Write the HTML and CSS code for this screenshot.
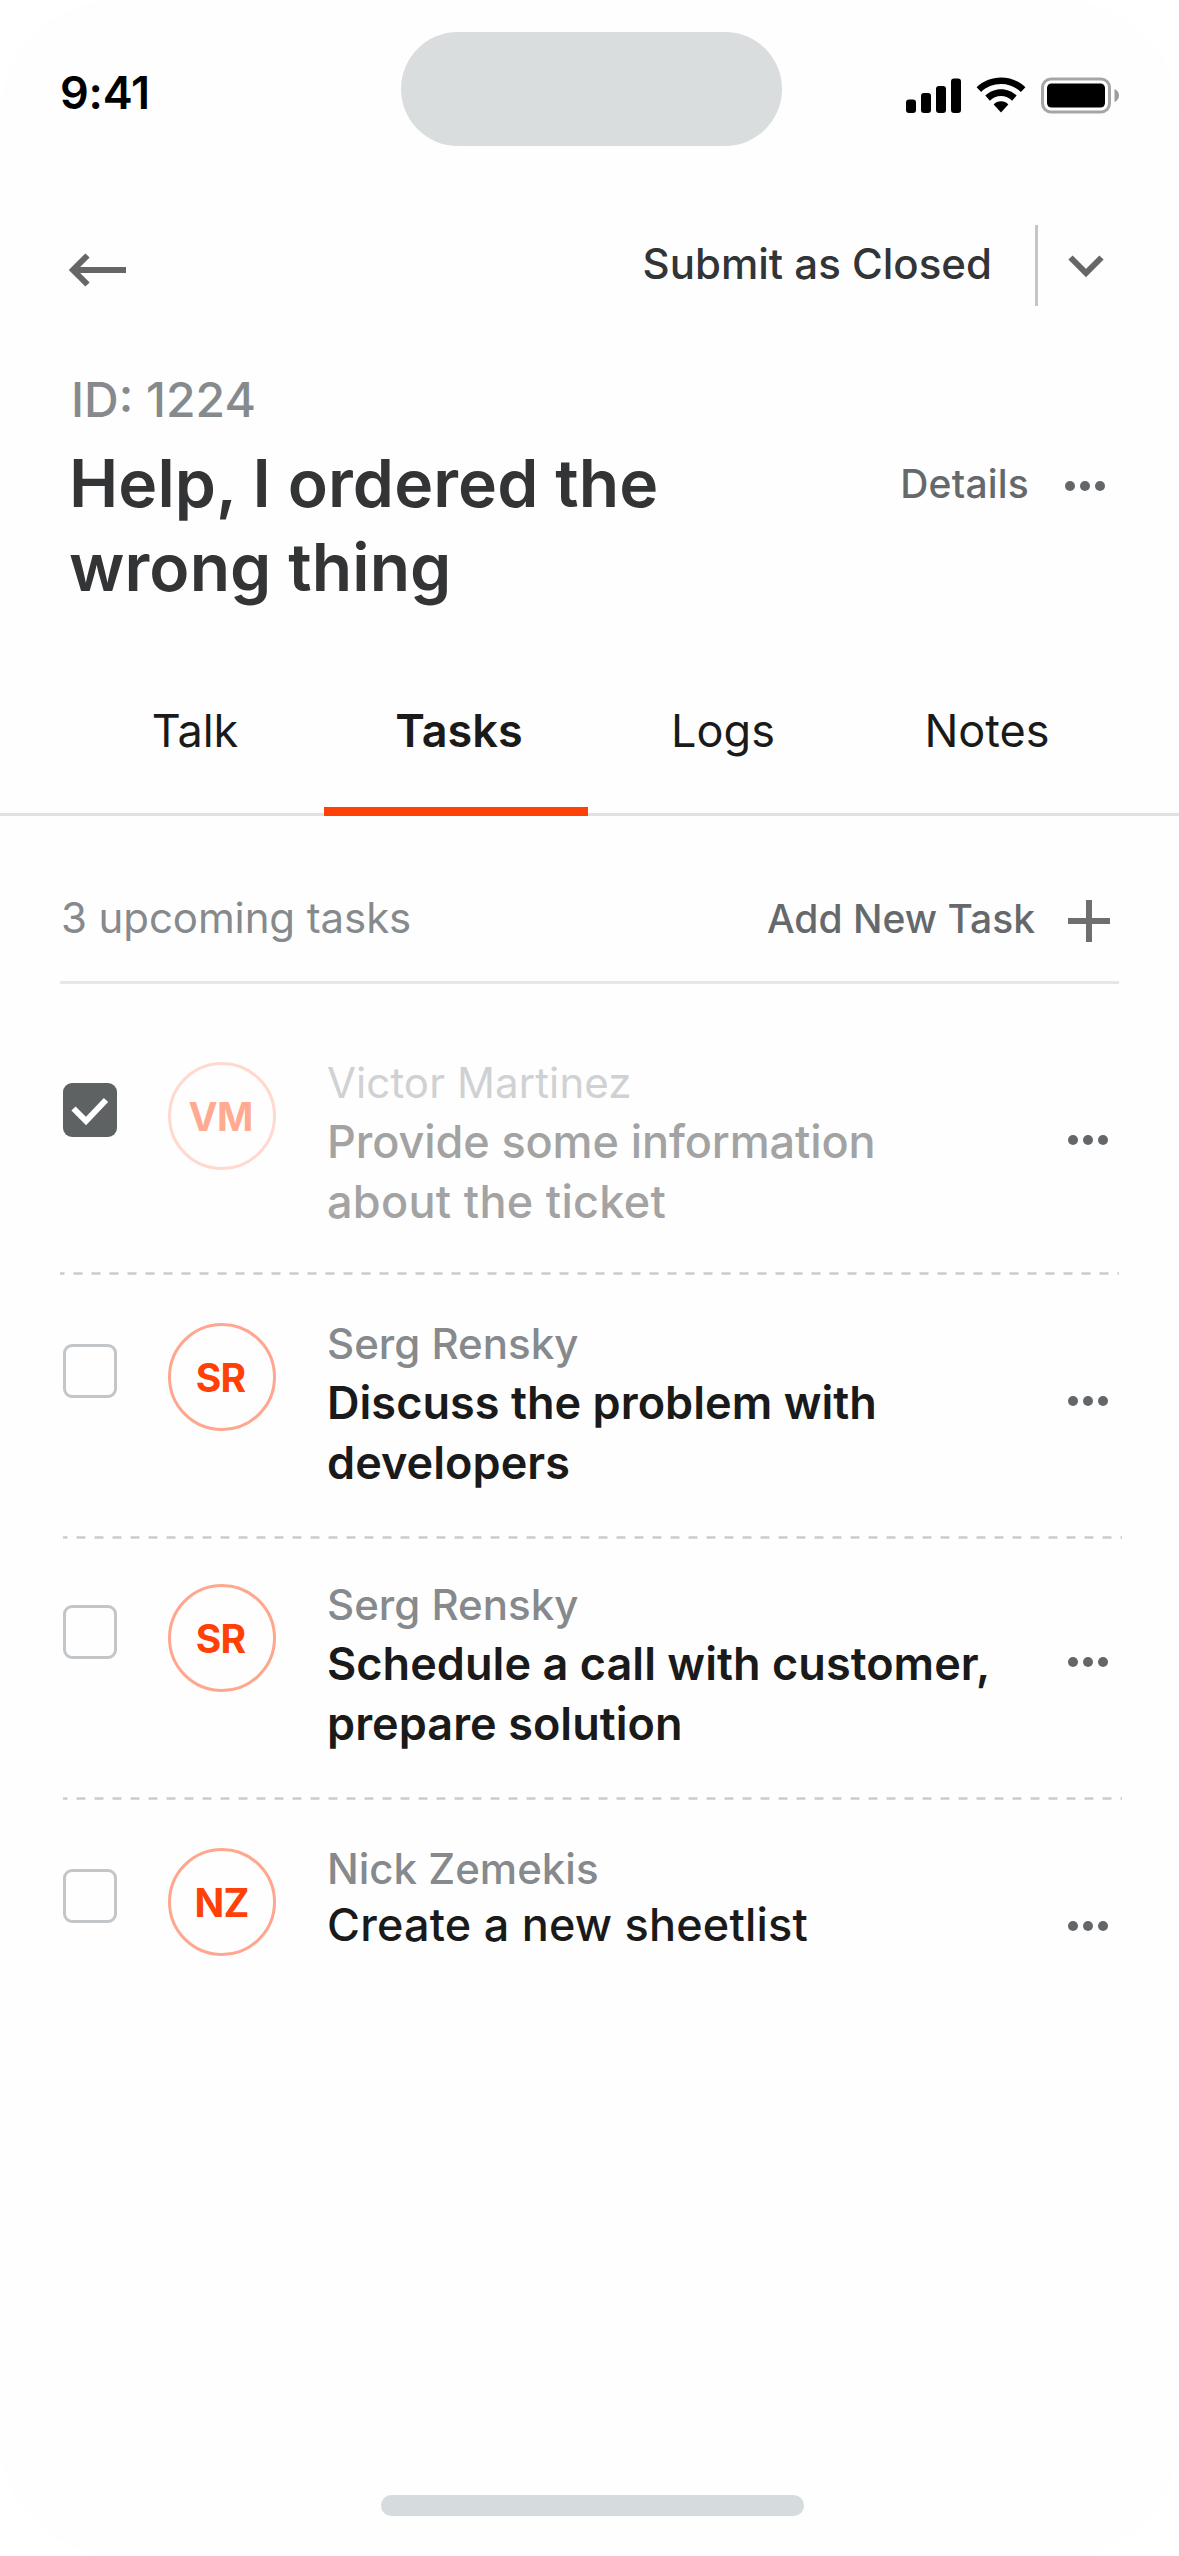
FILE: index.html
```
<!DOCTYPE html>
<html lang="en">
<head>
    <meta charset="UTF-8">
    <meta name="viewport" content="width=device-width, initial-scale=1.0">
    <title>Ticket 1224 - Tasks</title>
    <link rel="stylesheet" href="styles.css">
</head>
<body>

<div class="screen">
    <div class="status-bar">
        <div class="time">9:41</div>
        <div class="island"></div>
        <svg class="status-icons" width="214" height="38" viewBox="0 0 214 38">
            <rect x="0" y="22.5" width="10" height="13.5" rx="3"/>
            <rect x="15" y="16" width="10" height="20" rx="3"/>
            <rect x="30" y="9" width="10" height="27" rx="3"/>
            <rect x="45" y="1.5" width="10" height="34.5" rx="3"/>
            <path d="M95 0.5c-9.300 0-17.900 3.600-24.400 9.700l4.500 4.700c5.300-5 12.300-7.900 19.900-7.900s14.600 2.900 19.900 7.900l4.500-4.700C112.900 4.100 104.300.5 95 .5z"/>
            <path d="M95 12.300c-6 0-11.500 2.300-15.700 6.300l4.600 5.100c2.900-2.800 6.800-4.600 11.100-4.600s8.200 1.800 11.100 4.600l4.600-5.100c-4.200-4-9.700-6.300-15.700-6.300z"/>
            <path d="M95 24.300c-2.900 0-5.500 1.200-7.300 3.200L95 35.500l7.300-8c-1.800-2-4.400-3.200-7.300-3.200z"/>
            <rect class="battery-frame" x="136.500" y="2" width="67" height="33" rx="8.500"/>
            <rect x="141" y="6.500" width="58" height="24" rx="4.500"/>
            <path class="battery-cap" d="M208.500 12v13c2.700-1.100 4.500-3.600 4.500-6.500s-1.800-5.400-4.500-6.500z"/>
        </svg>
    </div>

    <div class="toolbar">
        <svg class="back" width="60" height="36" viewBox="0 0 60 36">
            <path d="M59 18H6M20.500 3.500L6 18l14.500 14.500"/>
        </svg>
        <div class="submit">Submit as Closed</div>
        <div class="divider"></div>
        <svg class="chevron" width="38" height="26" viewBox="0 0 38 26">
            <path d="M3.500 4.500L19 20 34.500 4.500"/>
        </svg>
    </div>

    <div class="ticket">
        <div class="ticket-id">ID: 1224</div>
        <div class="ticket-row">
            <h1>Help, I ordered the<br>wrong thing</h1>
            <div class="details">Details</div>
            <svg class="more" width="40" height="10" viewBox="0 0 40 10">
                <circle cx="5" cy="5" r="5"/><circle cx="20" cy="5" r="5"/><circle cx="35" cy="5" r="5"/>
            </svg>
        </div>
    </div>

    <div class="tabs">
        <div class="tab">Talk</div>
        <div class="tab active">Tasks</div>
        <div class="tab">Logs</div>
        <div class="tab">Notes</div>
    </div>

    <div class="list-header">
        <div class="count">3 upcoming tasks</div>
        <div class="add">Add New Task</div>
        <svg class="plus" width="42" height="42" viewBox="0 0 42 42">
            <path d="M21 0v42M0 21h42"/>
        </svg>
    </div>

    <div class="tasks">
        <div class="task first done">
            <div class="checkbox">
                <svg width="54" height="54" viewBox="0 0 54 54">
                    <path d="M10.500 25.500L23 38l20-21"/>
                </svg>
            </div>
            <div class="avatar">VM</div>
            <div class="task-body">
                <div class="name">Victor Martinez</div>
                <div class="text">Provide some information<br>about the ticket</div>
            </div>
            <svg class="more" width="40" height="10" viewBox="0 0 40 10">
                <circle cx="5" cy="5" r="5"/><circle cx="20" cy="5" r="5"/><circle cx="35" cy="5" r="5"/>
            </svg>
        </div>
        <svg class="dashes" width="1059" height="3"><path d="M0 1.500h1059"/></svg>

        <div class="task">
            <div class="checkbox"></div>
            <div class="avatar">SR</div>
            <div class="task-body">
                <div class="name">Serg Rensky</div>
                <div class="text">Discuss the problem with<br>developers</div>
            </div>
            <svg class="more" width="40" height="10" viewBox="0 0 40 10">
                <circle cx="5" cy="5" r="5"/><circle cx="20" cy="5" r="5"/><circle cx="35" cy="5" r="5"/>
            </svg>
        </div>
        <svg class="dashes shifted" width="1059" height="3"><path d="M0 1.500h1059"/></svg>

        <div class="task third">
            <div class="checkbox"></div>
            <div class="avatar">SR</div>
            <div class="task-body">
                <div class="name">Serg Rensky</div>
                <div class="text">Schedule a call with customer,<br>prepare solution</div>
            </div>
            <svg class="more" width="40" height="10" viewBox="0 0 40 10">
                <circle cx="5" cy="5" r="5"/><circle cx="20" cy="5" r="5"/><circle cx="35" cy="5" r="5"/>
            </svg>
        </div>
        <svg class="dashes shifted" width="1059" height="3"><path d="M0 1.500h1059"/></svg>

        <div class="task single">
            <div class="checkbox"></div>
            <div class="avatar">NZ</div>
            <div class="task-body">
                <div class="name">Nick Zemekis</div>
                <div class="text">Create a new sheetlist</div>
            </div>
            <svg class="more" width="40" height="10" viewBox="0 0 40 10">
                <circle cx="5" cy="5" r="5"/><circle cx="20" cy="5" r="5"/><circle cx="35" cy="5" r="5"/>
            </svg>
        </div>
    </div>

    <div class="home-bar"></div>
</div>

</body>
</html>
```
FILE: styles.css
```
* {
    box-sizing: border-box;
}
body {
    margin: 0;
    background-color: #fff;
    font-family: Inter, 'Liberation Sans', sans-serif;
}
svg {
    display: block;
    flex: none;
}
.screen {
    display: flex;
    flex-direction: column;
    width: 1179px;
    height: 2556px;
    background-color: #fefefe;
    border-radius: 117px;
    overflow: hidden;
}

/* status bar */
.status-bar {
    display: flex;
    height: 146px;
}
.time {
    width: 401px;
    padding: 63px 0 0 60px;
    font-size: 45px;
    font-weight: 600;
    line-height: 60px;
    letter-spacing: -0.2px;
    color: #000;
}
.island {
    width: 381px;
    height: 114px;
    margin-top: 32px;
    border-radius: 57px;
    background-color: #d9ddde;
}
.status-icons {
    margin: 77px 0 0 124px;
}
.battery-frame {
    fill: none;
    stroke: #a6a6a6;
    stroke-width: 3;
}
.battery-cap {
    fill: #9b9e9e;
}

/* back button and submit */
.toolbar {
    display: flex;
    height: 81px;
    margin-top: 79px;
    padding: 0 74px 0 67px;
}
.back {
    margin-top: 27px;
}
.back path,
.chevron path {
    fill: none;
    stroke: #646667;
    stroke-width: 6;
}
.submit {
    margin: 9px 43px 0 auto;
    font-size: 42px;
    font-weight: 500;
    line-height: 60px;
    color: #333436;
}
.divider {
    width: 3px;
    margin-right: 29px;
    background-color: #c2c6c9;
}
.chevron {
    margin-top: 28px;
}

.ticket {
    padding: 64px 74px 0 71px;
}
.ticket-id {
    font-size: 48px;
    font-weight: 500;
    line-height: 60px;
    color: #868a8d;
}
.ticket-row {
    display: flex;
    margin-top: 11px;
}
h1 {
    flex: 1;
    margin: 0 0 0 -2px;
    font-size: 66px;
    font-weight: 600;
    line-height: 84px;
    letter-spacing: 0.1px;
    color: #333436;
}
.details {
    margin: 18px 36px 0 0;
    font-size: 39px;
    font-weight: 500;
    line-height: 50px;
    letter-spacing: 0.2px;
    color: #66696b;
}
.more {
    margin-top: 40px;
    fill: #646769;
}

/* tabs */
.tabs {
    display: flex;
    height: 175px;
    margin-top: 32px;
    padding-left: 60px;
    border-bottom: 3px solid #dfe2e2;
}
.tab {
    width: 264px;
    height: 175px;
    padding: 60px 0 0 6px;
    font-size: 45px;
    line-height: 60px;
    text-align: center;
    color: #1a1a1a;
}
.tab.active {
    border-bottom: 9px solid #ff4007;
    font-weight: 600;
}

/* list header */
.list-header {
    display: flex;
    height: 168px;
    margin: 0 60px;
    padding-right: 9px;
    border-bottom: 3px solid #e6e6e6;
    line-height: 60px;
}
.count {
    flex: 1;
    padding: 72px 0 0 1px;
    font-size: 42px;
    letter-spacing: -0.1px;
    color: #868a8d;
}
.add {
    margin-right: 33px;
    padding-top: 73px;
    font-size: 39px;
    font-weight: 500;
    color: #66696b;
}
.plus {
    margin-top: 84px;
}
.plus path {
    stroke: #6f6f6f;
    stroke-width: 6;
}

/* task list */
.task {
    display: flex;
    height: 261px;
    padding: 48px 71px 0 63px;
}
.task.first {
    height: 288px;
    padding-top: 78px;
}
.task.third {
    height: 258px;
    padding-top: 45px;
}
.checkbox {
    width: 54px;
    height: 54px;
    margin-top: 21px;
    border: 3px solid #c2c6c9;
    border-radius: 9px;
}
.done .checkbox {
    border: none;
    background-color: #5f6263;
}
.checkbox path {
    fill: none;
    stroke: #fff;
    stroke-width: 6;
}
.avatar {
    width: 108px;
    height: 108px;
    margin: 0 51px;
    border: 3px solid #ffa78e;
    border-radius: 50%;
    font-size: 39px;
    font-weight: 700;
    line-height: 104px;
    letter-spacing: -0.8px;
    text-align: center;
    text-indent: -3px;
    color: #ff4007;
}
.done .avatar {
    border-color: #ffd9ce;
    color: #ffaa91;
}
.single .avatar {
    text-indent: -1px;
}
.task-body {
    flex: 1;
}
.name {
    margin: -3px 0 5px;
    font-size: 42px;
    font-weight: 500;
    line-height: 48px;
    color: #868a8d;
}
.text {
    font-size: 45px;
    font-weight: 600;
    line-height: 60px;
    letter-spacing: 0.05px;
    color: #1a1a1a;
}
.done .name {
    font-weight: 400;
    letter-spacing: 0.1px;
    color: #cfd1d2;
}
.done .text {
    font-weight: 500;
    letter-spacing: 0.3px;
    color: #a3a3a3;
}
.done .text::first-line {
    letter-spacing: -0.1px;
}
.single .text {
    margin-top: -3px;
    font-weight: 500;
    letter-spacing: 0.2px;
}
.task .more {
    margin-top: 73px;
}
.dashes {
    margin-left: 60px;
}
.dashes.shifted {
    margin-left: 63px;
}
.dashes path {
    stroke: #ccc;
    stroke-width: 2.5;
    stroke-dasharray: 9 9;
    stroke-dashoffset: 4.5;
}

.home-bar {
    width: 423px;
    height: 21px;
    margin: auto auto 40px 381px;
    border-radius: 11px;
    background-color: #d6dbdd;
}
```
